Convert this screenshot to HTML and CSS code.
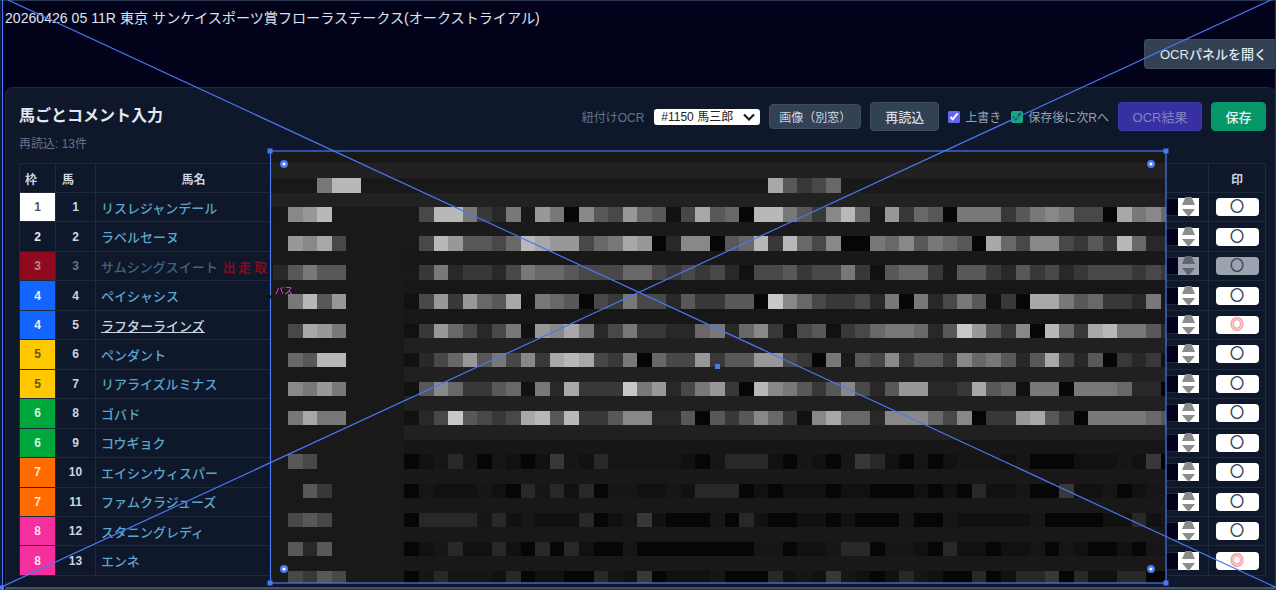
FILE: index.html
```html
<!DOCTYPE html>
<html lang="ja">
<head>
<meta charset="utf-8">
<title>馬ごとコメント入力</title>
<link rel="stylesheet" href="styles.css">
</head>
<body>
<div class="page">
  <header class="top">
    <div class="race-title">20260426 05 11R 東京 サンケイスポーツ賞フローラステークス(オークストライアル)</div>
    <button class="open-ocr" type="button">OCRパネルを開く</button>
  </header>
  <section class="panel">
    <div class="panel-head">
      <h1 class="panel-title">馬ごとコメント入力</h1>
      <div class="toolbar">
        <span class="tool-label">紐付けOCR</span>
        <select class="ocr-select"><option>#1150 馬三郎</option></select>
        <button class="btn btn-image" type="button">画像（別窓）</button>
        <button class="btn btn-tall" type="button">再読込</button>
        <label class="check check-first"><input class="check-indigo" type="checkbox" checked>上書き</label>
        <label class="check"><input class="check-green" type="checkbox" checked>保存後に次Rへ</label>
        <button class="btn btn-tall btn-ocr" type="button">OCR結果</button>
        <button class="btn btn-tall btn-save" type="button">保存</button>
      </div>
    </div>
    <p class="reload-note">再読込: 13件</p>
    <table class="horses">
      <colgroup><col class="c-waku"><col class="c-no"><col class="c-name"><col class="c-comment"><col class="c-mark"></colgroup>
      <thead>
        <tr><th class="th-left">枠</th><th class="th-left th-no">馬</th><th>馬名</th><th></th><th>印</th></tr>
      </thead>
      <tbody id="rows"></tbody>
    </table>
  </section>

  <div class="mosaic-wrap"><canvas id="mosaic" width="896" height="432"></canvas></div>

  <svg class="overlay" width="1276" height="590" viewBox="0 0 1276 590" aria-hidden="true">
    <rect class="frame-faint" x="0" y="0.5" width="1275.5" height="589"/>
    <line class="guide" x1="2.5" y1="0" x2="2.5" y2="590"/>
    <line class="guide" x1="8" y1="0" x2="1276" y2="587.5"/>
    <line class="guide" x1="0" y1="587.7" x2="1271" y2="0"/>
    <rect class="guide-box" x="270.5" y="151" width="895.5" height="432"/>
    <rect class="handle" x="267.5" y="148.5" width="5" height="5"/>
    <rect class="handle" x="1163.5" y="148.5" width="5" height="5"/>
    <rect class="handle" x="267.5" y="580.5" width="5" height="5"/>
    <rect class="handle" x="1163.5" y="580.5" width="5" height="5"/>
    <rect class="handle" x="715" y="364" width="5" height="5"/>
    <rect class="handle" x="0" y="585.5" width="4" height="4"/>
    <circle class="knob" cx="284" cy="164" r="2.8"/>
    <circle class="knob" cx="1151" cy="164" r="2.8"/>
    <circle class="knob" cx="284" cy="569" r="2.8"/>
    <circle class="knob" cx="1151" cy="569" r="2.8"/>
    <path class="cross" d="M268.5 295.5l3 3m0-3l-3 3"/>
  </svg>
  <span class="tag">バス</span>
</div>
<script src="script.js"></script>
</body>
</html>
```

FILE: styles.css
```css
* { box-sizing: border-box; }
html, body { margin: 0; height: 590px; overflow: hidden; }
body { background: #02031a; color: #e2e8f0; font-family: "Liberation Sans", "Noto Sans CJK JP", sans-serif; }
.page { position: relative; width: 1276px; height: 590px; display: flex; flex-direction: column; overflow: hidden; }

.top { height: 87px; flex: none; display: flex; flex-direction: column; padding: 9px 0 0 5px; }
.race-title { font-size: 14.1px; line-height: 19px; color: #dfe5ee; }
.open-ocr { align-self: flex-end; margin-top: 11px; width: 132px; height: 30px; padding: 0 0 2px 15px; text-align: left; background: #334155; color: #e2e8f0; border: 1px solid #3e4c60; border-right: 0; border-radius: 4px 0 0 4px; font: 500 13px "Liberation Sans", "Noto Sans CJK JP", sans-serif; }

.panel { flex: none; height: 502px; margin-left: 5px; padding: 14px 9px 0 13px; background: #0f172a; border: 1px solid #1e293b; border-bottom: 2px solid #475164; border-radius: 8px 8px 0 0; }
.panel-head { display: flex; justify-content: space-between; align-items: center; height: 29px; }
.panel-title { align-self: flex-start; margin: 0; font-size: 16px; line-height: 28px; font-weight: 700; color: #e2e8f0; }
.toolbar { display: flex; align-items: center; gap: 9px; }
.tool-label { font-size: 12px; color: #64748b; margin-right: 1px; }
.ocr-select { appearance: none; width: 106px; height: 16px; padding: 0 0 0 7px; background: #fff url("data:image/svg+xml,%3Csvg xmlns='http://www.w3.org/2000/svg' width='12' height='8'%3E%3Cpath d='M1 1.5l5 5 5-5' fill='none' stroke='%23222' stroke-width='2.2'/%3E%3C/svg%3E") no-repeat right 5px center; color: #222; border: 0; border-radius: 3px; font: 12px "Liberation Sans", "Noto Sans CJK JP", sans-serif; }
.btn { padding: 0; border: 1px solid #3e4c60; border-radius: 4px; background: #334155; color: #d5dce6; font: 500 13px "Liberation Sans", "Noto Sans CJK JP", sans-serif; }
.btn-image { width: 92px; height: 25px; font-size: 12px; font-weight: 400; color: #cbd5e1; }
.btn-tall { width: 69px; height: 29px; }
.btn-ocr { width: 84px; background: #3730a3; border-color: #3f38ad; color: #8482c0; font-weight: 400; }
.btn-save { width: 55px; background: #059669; border-color: #059669; color: #e6f7f1; }
.check { display: flex; align-items: center; gap: 5px; font-size: 12px; color: #94a3b8; }
.check-first { margin-right: 1px; }
.check input { width: 12px; height: 12px; margin: 0; }
.check-indigo { accent-color: #6366f1; }
.check-green { accent-color: #10ab78; }
.reload-note { margin: 5px 0 11px; font-size: 12px; line-height: 16px; color: #64748b; }

.horses { width: 1247px; table-layout: fixed; border-collapse: collapse; font-size: 13px; }
.c-waku { width: 36px; } .c-no { width: 40px; } .c-name { width: 196px; } .c-mark { width: 57px; }
.horses th, .horses td { border: 1px solid #1e293b; padding: 0; }
.horses th { height: 29px; font-size: 12px; font-weight: 700; color: #cbd5e1; text-align: center; }
.horses th.th-left { text-align: left; padding-left: 5px; }
.horses th.th-no { padding-left: 6px; }
.horses td { height: 29.46px; }
.waku { text-align: center; font-size: 12px; font-weight: 700; }
.w1 { background: #fff; color: #555; }
.w2 { background: #0f172a; color: #e2e8f0; }
.w3 { background: #8f0a1f; color: #b98791; }
.w4 { background: #1266ff; color: #e6efff; }
.w5 { background: #ffc800; color: #6a5510; }
.w6 { background: #00a83c; color: #d6f3df; }
.w7 { background: #ff6b00; color: #ffe6d3; }
.w8 { background: #f52f9e; color: #ffdcee; }
.num { text-align: center; font-size: 12px; font-weight: 700; color: #cbd5e1; }
.name-cell { padding-left: 5px !important; white-space: nowrap; overflow: hidden; }
.name { font-weight: 500; color: #5aa5ca; }
.name.active { color: #cbd5e1; text-decoration: underline; }
.scratched .num { color: #64748b; }
.scratched .name { color: #3f6580; }
.scratch-note { margin-left: 5px; font-weight: 700; letter-spacing: 2.6px; color: #7f0d20; }
.comment-cell { text-align: right; padding-right: 9px !important; }
.eval { display: inline-flex; vertical-align: middle; height: 18px; }
.eval-input { width: 60px; height: 18px; padding: 0; background: #02031a; border: 1px solid #1e293b; border-right: 0; }
.spin { display: block; width: 21px; height: 18px; background: #fff; overflow: visible; }
.spin path { fill: #8c8c8c; }
.mark-cell { text-align: center; }
.mark { display: inline-flex; align-items: center; justify-content: center; vertical-align: middle; width: 43px; height: 18px; padding: 0 0 4px; border: 0; border-radius: 4px; background: #fff; color: #3f4a5e; font: 700 13.5px "Noto Sans CJK JP", sans-serif; -webkit-text-stroke: 0.7px currentColor; }
.mark.hot { color: #f9a0a0; }
.scratched .mark, .scratched .spin { background: #9ca3af; }
.scratched .spin path { fill: #5f6672; }

.mosaic-wrap { position: absolute; left: 270px; top: 151px; width: 896px; height: 432px; background: #191919; }
#mosaic { display: block; }
.overlay { position: absolute; left: 0; top: 0; pointer-events: none; }
.frame-faint { fill: none; stroke: #2b3650; stroke-width: 1; }
.guide, .guide-box { stroke: #4a78f5; stroke-width: 1.2; fill: none; }
.handle { fill: #4a78f5; }
.knob { fill: #fff; stroke: #4a78f5; stroke-width: 2.4; }
.cross { stroke: #000; stroke-width: 1.2; fill: none; }
.tag { position: absolute; left: 275px; top: 285px; font-size: 9px; line-height: 13px; color: #f04cf0; }
```

FILE: script.js
```js
var horses = [
  [1, 1, "リスレジャンデール", "○"],
  [2, 2, "ラベルセーヌ", "○"],
  [3, 3, "サムシングスイート", "○", "scratched"],
  [4, 4, "ペイシャシス", "○"],
  [4, 5, "ラフターラインズ", "◎", "active"],
  [5, 6, "ペンダント", "○"],
  [5, 7, "リアライズルミナス", "○"],
  [6, 8, "ゴバド", "○"],
  [6, 9, "コウギョク", "○"],
  [7, 10, "エイシンウィスパー", "○"],
  [7, 11, "ファムクラジューズ", "○"],
  [8, 12, "スタニングレディ", "○"],
  [8, 13, "エンネ", "◎"]
];
var spin = '<svg class="spin" viewBox="0 0 21 18"><path d="M7.5-1h6L17 7H4z"/><path d="M4 11h13l-6.5 8z"/></svg>';
document.getElementById("rows").innerHTML = horses.map(function (h) {
  var state = h[4] || "";
  var nameClass = state === "active" ? "name active" : "name";
  var note = state === "scratched" ? '<span class="scratch-note">出走取消</span>' : "";
  var markClass = h[3] === "◎" ? "mark hot" : "mark";
  return '<tr class="' + state + '">' +
    '<td class="waku w' + h[0] + '">' + h[0] + '</td>' +
    '<td class="num">' + h[1] + '</td>' +
    '<td class="name-cell"><span class="' + nameClass + '">' + h[2] + '</span>' + note + '</td>' +
    '<td class="comment-cell"><span class="eval"><input class="eval-input" type="text">' + spin + '</span></td>' +
    '<td class="mark-cell"><button class="' + markClass + '" type="button">' + h[3] + '</button></td>' +
    '</tr>';
}).join("");

var shades = { ".": 0x19, "0": 0x06, "1": 0x11, "2": 0x28, "3": 0x38, "4": 0x48, "5": 0x58, "6": 0x68, "7": 0x78, "8": 0x88, "9": 0x98, "a": 0xa8, "b": 0xb8, "c": 0xc8 };
var CELL = 14.55, X0 = 3.45, Y0 = 27;
var cells = {
  0: "...7bb",
  2: ".89b......4bb7327.97085496514a560bb7538b6.9365077735787440a786",
  4: ".98a4.....4b95546ba99467a90288056b3b6480076857650a64884353b622",
  6: "25755.....376" ,
  8: ".7b59....1493965a17650437442533550c86433427072475130aa7563327.",
  10: ".4a97....13964247198a72473322672683145134677625c95380b63ab7752",
  12: ".65bb....1246957483aba43706449355994307.5483553867525a42503231",
  14: ".8797....15863356172a333c79247930b87535842599223a5617707776220",
  16: ".7a77....124c5434ab5b33588225053586318a6628886480339a530777765",
  19: ".54......01.2.0.1013.12.....10.22210.10.3210.01...1.000111.130",
  21: "..53.....0.111.102.2120..11.12220101110110001010211.00311.01..",
  23: ".454.....02222.21.111201.31000.021001101000.00.11111.00001121.",
  25: ".525.....01.211210202100.00000000..011.220..10211011.0.10010..",
  27: ".4354....0.2...12011002.130111.00021.13.1012.10020122302112200"
};
cells[6] = "25755.....37233247665444664343" + "4214453447315663.5532534234443" + "43";
var titleRight = { 34: "a", 35: "5", 36: "3", 37: "4", 38: "6" };
var bands = { "-1": 0x21, 1: 0x21, 3: 0x1a, 5: 0x18, 7: 0x17, 9: 0x17, 11: 0x20, 13: 0x20, 15: 0x20, 17: 0x20, 18: 0x16 };
var ctx = document.getElementById("mosaic").getContext("2d");
function gray(v) { return "rgb(" + v + "," + v + "," + v + ")"; }
function fillCell(c, n, v) {
  var x1 = Math.round(X0 + CELL * c), x2 = Math.round(X0 + CELL * (c + 1));
  var y1 = Math.round(Y0 + CELL * n), y2 = Math.round(Y0 + CELL * (n + 1));
  ctx.fillStyle = gray(v);
  ctx.fillRect(x1, y1, x2 - x1, y2 - y1);
}
ctx.fillStyle = gray(0x19);
ctx.fillRect(0, 0, 896, 432);
for (var n = -2; n < 28; n++) {
  var band = bands[n] || 0x18;
  var fromCol = n < 3 ? -1 : 9;
  for (var c = fromCol; c < 62; c++) fillCell(c, n, band);
}
Object.keys(cells).forEach(function (key) {
  var row = +key, text = cells[key];
  for (var c = 0; c < 62; c++) {
    var ch = text.charAt(c) || ".";
    if (row === 0 && titleRight[c]) ch = titleRight[c];
    var v = shades[ch];
    if (row >= 19 && c >= 9 && ch === ".") v = 0x16;
    fillCell(c, row, v);
  }
});
```
